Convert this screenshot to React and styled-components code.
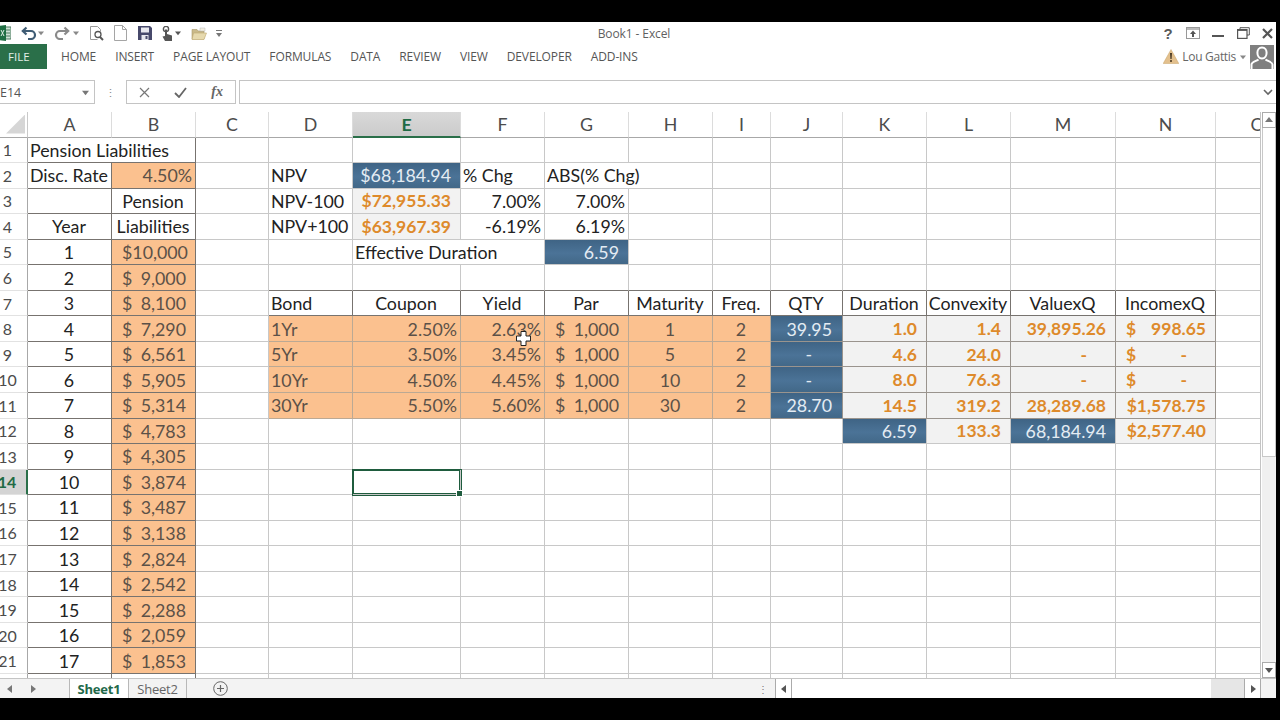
import React from "react";
import styled, { createGlobalStyle, css } from "styled-components";

const GlobalStyle = createGlobalStyle`
  html, body { margin: 0; padding: 0; background: #000; }
  body { width: 1280px; height: 720px; overflow: hidden; }
`;

const Screen = styled.div`
  width: 1280px;
  height: 720px;
  background: #000;
  padding-top: 22px;
  box-sizing: border-box;
`;
const Window = styled.div`
  width: 1276px;
  height: 676px;
  background: #fff;
  display: flex;
  flex-direction: column;
  overflow: hidden;
  font-family: "Open Sans", "Liberation Sans", sans-serif;
  color: #555;
`;

/* title bar */
const TitleBar = styled.div`
  height: 22px;
  flex: none;
  display: grid;
  grid-template-columns: 1fr auto 1fr;
  align-items: center;
`;
const QuickAccess = styled.div`
  display: flex;
  align-items: center;
  margin-left: -1px;
`;
const Slot = styled.span`
  display: flex;
  align-items: center;
  justify-content: center;
  flex: none;
  width: ${(p) => p.$w}px;
  height: 20px;
  margin-left: ${(p) => p.$ml || 0}px;
  svg {
    flex: none;
  }
`;
const Title = styled.div`
  font-size: 12px;
  color: #5f5f5f;
  letter-spacing: -0.1px;
  margin-right: 8px;
`;
const WindowButtons = styled.div`
  display: flex;
  justify-content: flex-end;
  align-items: center;
`;
const Help = styled.span`
  font: bold 15px "Liberation Sans", sans-serif;
  color: #5a5a5a;
`;

/* ribbon tabs */
const Ribbon = styled.div`
  height: 25px;
  flex: none;
  display: flex;
  align-items: center;
`;
const FileTab = styled.div`
  width: 47px;
  height: 25px;
  background: #2a6f49;
  color: #e3efe8;
  font-size: 11.5px;
  display: flex;
  align-items: center;
  padding-left: 8px;
  box-sizing: border-box;
  margin-right: 14px;
`;
const Tab = styled.div`
  font-size: 12px;
  letter-spacing: -0.12px;
  color: #555;
  white-space: nowrap;
  margin-right: ${(p) => p.$gap}px;
`;
const Account = styled.div`
  margin-left: auto;
  display: flex;
  align-items: center;
  height: 25px;
  font-size: 12px;
  letter-spacing: -0.3px;
  color: #666;
`;
const AccountName = styled.span`
  margin: 0 4px 0 3px;
`;
const Avatar = styled.div`
  width: 24px;
  height: 24px;
  background: #7f7f7f;
  margin: 0 2px 0 4px;
`;

/* formula bar */
const FormulaRow = styled.div`
  height: 43px;
  flex: none;
  box-sizing: border-box;
  padding-top: 11px;
  display: flex;
  align-items: flex-start;
`;
const NameBox = styled.div`
  width: 95px;
  height: 24px;
  box-sizing: border-box;
  border: 1px solid #c4c4c4;
  border-left: 0;
  display: flex;
  align-items: center;
  justify-content: space-between;
  padding-right: 5px;
  font-size: 12.5px;
  color: #555;
`;
const Grip = styled.div`
  width: 31px;
  height: 24px;
  display: flex;
  align-items: center;
  justify-content: center;
  color: #888;
  font-size: 11px;
`;
const FormulaButtons = styled.div`
  width: 110px;
  height: 24px;
  box-sizing: border-box;
  border: 1px solid #c4c4c4;
  display: flex;
  align-items: center;
  justify-content: space-around;
  margin-right: 3px;
`;
const FxLabel = styled.span`
  font: italic bold 14px "Liberation Serif", serif;
  color: #666;
`;
const FormulaInput = styled.div`
  flex: 1;
  height: 24px;
  box-sizing: border-box;
  border: 1px solid #c4c4c4;
  border-right: 0;
  display: flex;
  align-items: center;
  justify-content: flex-end;
  padding-right: 3px;
`;

/* sheet */
const Body = styled.div`
  flex: 1;
  min-height: 0;
  display: flex;
`;
const SheetArea = styled.div`
  position: relative;
  width: 1261px;
  flex: none;
  overflow: hidden;
  border-right: 1px solid #c4c4c4;
  box-sizing: border-box;
`;
const Grid = styled.div`
  display: grid;
  grid-template-columns: 28px 84px 84px 73px 84px 108px 84px 84px 84px 58px 72px 84px 84px 105px 100px 84px;
  grid-template-rows: 25.5px repeat(22, 25.55px);
  font-family: Lato, "Open Sans", sans-serif;
  font-size: 17.8px;
  color: #222;
`;
const Corner = styled.div`
  background: #fff;
  border-bottom: 1px solid #a8a8a8;
  border-right: 1px solid #c9c9c9;
  box-sizing: border-box;
  display: flex;
  align-items: flex-end;
  justify-content: flex-end;
  padding: 0 2px 3px 0;
  &::after {
    content: "";
    width: 19px;
    height: 19px;
    background: #d6d6d6;
    clip-path: polygon(100% 0, 100% 100%, 0 100%);
  }
`;
const ColHead = styled.div`
  display: flex;
  align-items: center;
  justify-content: center;
  box-sizing: border-box;
  border-right: 1px solid #dcdcdc;
  border-bottom: 1px solid #a8a8a8;
  color: #4c4c4c;
  ${(p) =>
    p.$active &&
    css`
      background: linear-gradient(#d9d9d9, #cbcbcb);
      color: #1f6b45;
      font-weight: 700;
      border-bottom: 2px solid #2a6f49;
    `}
`;
const RowHead = styled.div`
  display: flex;
  align-items: center;
  justify-content: center;
  box-sizing: border-box;
  padding-right: 12px;
  border-right: 1px solid #a8a8a8;
  border-bottom: 1px solid #e2e2e2;
  color: #4c4c4c;
  font-size: 16px;
  white-space: nowrap;
  ${(p) =>
    p.$active &&
    css`
      background: #d4d4d4;
      color: #1f6b45;
      font-weight: 700;
      border-right: 2px solid #2a6f49;
    `}
`;

const tones = {
  peach: css`
    background: #fbc18f;
    color: #5c5148;
  `,
  navy: css`
    background: linear-gradient(#3f6485, #4b7397 55%, #426888);
    color: #e4ecf3;
  `,
  calc: css`
    background: #f2f2f2;
    color: #de8a2b;
    font-weight: 700;
    font-size: 17.5px;
  `,
};
const Cell = styled.div`
  position: relative;
  min-width: 0;
  box-sizing: border-box;
  display: flex;
  align-items: center;
  white-space: nowrap;
  padding: 0 ${(p) => p.$padR ?? 3}px 0 ${(p) => p.$padL ?? 2}px;
  justify-content: ${(p) =>
    p.$money ? "space-between" : p.$align === "right" ? "flex-end" : p.$align === "center" ? "center" : "flex-start"};
  grid-column: span ${(p) => p.$span || 1};
  border-right: 1px solid ${(p) => p.$lineR};
  border-bottom: 1px solid ${(p) => p.$lineB};
  ${(p) => p.$tone && tones[p.$tone]}
  ${(p) =>
    p.$selected &&
    css`
      z-index: 1;
      box-shadow: inset 0 0 0 1px #1f5c3e, 0 0 0 1px #1f5c3e;
      &::after {
        content: "";
        position: absolute;
        right: -3px;
        bottom: -3px;
        width: 5px;
        height: 5px;
        background: #1f5c3e;
        border: 1px solid #fff;
      }
    `}
`;
const Pointer = styled.div`
  position: absolute;
  left: 516px;
  top: 219px;
  line-height: 0;
  z-index: 2;
`;

/* vertical scroll bar */
const VScroll = styled.div`
  flex: 1;
  display: flex;
  flex-direction: column;
  background: #f0f0f0;
  margin-left: 1px;
`;
const ScrollBtn = styled.div`
  height: 16px;
  flex: none;
  background: #fff;
  box-sizing: border-box;
  border: 1px solid #ababab;
  display: flex;
  align-items: center;
  justify-content: center;
`;
const VThumb = styled.div`
  height: 329px;
  flex: none;
  background: #fff;
  box-sizing: border-box;
  border: 1px solid #c8c8c8;
  border-top: 0;
`;
const VTrack = styled.div`
  flex: 1;
`;

/* sheet tabs + horizontal scroll bar */
const TabStrip = styled.div`
  height: 20px;
  flex: none;
  display: flex;
  align-items: stretch;
  background: #f3f3f3;
  border-top: 1px solid #c4c4c4;
  box-sizing: border-box;
  font-size: 13px;
`;
const NavArrows = styled.div`
  width: 69px;
  flex: none;
  display: flex;
  align-items: center;
  gap: 15px;
  padding-left: 6px;
  box-sizing: border-box;
`;
const SheetTab = styled.div`
  width: 59px;
  flex: none;
  display: flex;
  align-items: center;
  justify-content: center;
  box-sizing: border-box;
  border-left: 1px solid #b8b8b8;
  border-right: ${(p) => (p.$active ? "0" : "1px solid #b8b8b8")};
  background: ${(p) => (p.$active ? "#fff" : "#f3f3f3")};
  color: ${(p) => (p.$active ? "#22694a" : "#666")};
  font-weight: ${(p) => (p.$active ? 700 : 400)};
  letter-spacing: -0.2px;
`;
const AddSheet = styled.div`
  width: 563px;
  flex: none;
  display: flex;
  align-items: center;
  padding-left: 26px;
  box-sizing: border-box;
`;
const SplitDots = styled.div`
  width: 25px;
  flex: none;
  color: #777;
  display: flex;
  align-items: center;
  justify-content: center;
  font-size: 10px;
`;
const HBtn = styled.div`
  width: 17px;
  flex: none;
  background: #fff;
  box-sizing: border-box;
  border: 1px solid #ababab;
  border-width: 0 1px;
  display: flex;
  align-items: center;
  justify-content: center;
`;
const HThumb = styled.div`
  width: 419px;
  flex: none;
  background: #fff;
`;
const HTrack = styled.div`
  width: 33px;
  flex: none;
  background: #e6e6e6;
`;

const Arrow = ({ dir = "down", size = 8, color = "#666" }) => {
  const pts = {
    down: "0,2 8,2 4,7",
    up: "0,6 8,6 4,1",
    left: "6,0 6,8 1,4",
    right: "2,0 2,8 7,4",
  };
  return (
    <svg width={size} height={size} viewBox="0 0 8 8">
      <polygon points={pts[dir]} fill={color} />
    </svg>
  );
};

const ExcelLogo = () => (
  <svg width="12" height="16" viewBox="0 0 12 16">
    <rect x="5" y="2" width="7" height="12" fill="#cfe2d6" stroke="#4b7a5e" />
    <path d="M7 5h4M7 8h4M7 11h4" stroke="#4b7a5e" />
    <path d="M0 1l7 -1v16l-7 -1z" fill="#1f6e43" />
    <path d="M2 5l3 6M5 5l-3 6" stroke="#dfeee5" />
  </svg>
);
const UndoIcon = ({ color, flip }) => (
  <svg width="16" height="14" viewBox="0 0 16 14" style={flip ? { transform: "scaleX(-1)" } : undefined}>
    <path d="M5.5 1.5L1.8 5l3.7 3.5" fill="none" stroke={color} strokeWidth="2.2" />
    <path d="M2 5h8a4 4 0 0 1 0 8H7" fill="none" stroke={color} strokeWidth="2.2" />
  </svg>
);
const PreviewIcon = () => (
  <svg width="16" height="16" viewBox="0 0 16 16">
    <path d="M1.5 14.5v-13h7l3 3v2" fill="none" stroke="#9a9a9a" />
    <path d="M1.5 14.5h7" fill="none" stroke="#9a9a9a" />
    <circle cx="9" cy="9.5" r="3" fill="#fff" stroke="#555" strokeWidth="1.3" />
    <path d="M11 12l3 3" stroke="#555" strokeWidth="2" />
  </svg>
);
const DocIcon = () => (
  <svg width="13" height="16" viewBox="0 0 13 16">
    <path d="M.5 15.5V.5h8l4 4v11zM8.5.5v4h4" fill="#fff" stroke="#a5a5a5" />
  </svg>
);
const SaveIcon = () => (
  <svg width="14" height="14" viewBox="0 0 14 14">
    <path d="M0 0h12l2 2v12H0z" fill="#47496b" />
    <rect x="3" y="1.5" width="8" height="5" fill="#e8e8ee" />
    <rect x="3.5" y="9" width="7" height="5" fill="#e8e8ee" />
    <rect x="7.5" y="10" width="2" height="3" fill="#47496b" />
  </svg>
);
const TouchIcon = () => (
  <svg width="13" height="15" viewBox="0 0 13 15">
    <circle cx="5" cy="3" r="2.6" fill="none" stroke="#555" strokeWidth="1.4" />
    <path d="M4 3.5h2V8l5 1.5V15H4L1.5 10.5 4 10z" fill="#555" />
  </svg>
);
const FolderIcon = () => (
  <svg width="16" height="13" viewBox="0 0 16 13">
    <path d="M1 2.5h5l1.2 1.5H13v8H1z" fill="#c9b98a" stroke="#a8986a" strokeWidth=".6" />
    <path d="M2.5 6h13L13 12.5H1z" fill="#e6d9ae" stroke="#bda86f" strokeWidth=".6" />
    <path d="M9 1h5v3H9z" fill="#f4f0e2" stroke="#bbb" strokeWidth=".5" />
  </svg>
);
const Customize = () => (
  <svg width="8" height="9" viewBox="0 0 8 9">
    <path d="M1 1.5h6" stroke="#777" />
    <polygon points="1,4 7,4 4,8" fill="#777" />
  </svg>
);
const RibbonDisplay = () => (
  <svg width="14" height="12" viewBox="0 0 14 12">
    <rect x=".5" y=".5" width="13" height="11" fill="#fff" stroke="#999" />
    <path d="M1 1h12v2H1z" fill="#bbb" />
    <path d="M7 3.5L4 7h2v3h2V7h2z" fill="#555" />
  </svg>
);
const Minimize = () => (
  <svg width="12" height="12" viewBox="0 0 12 12">
    <rect x="0" y="8" width="12" height="2" fill="#555" />
  </svg>
);
const Restore = () => (
  <svg width="13" height="12" viewBox="0 0 13 12">
    <path d="M3 2V.7h9.3V8H10" fill="none" stroke="#555" />
    <rect x=".6" y="2.6" width="9.4" height="8.8" fill="none" stroke="#555" strokeWidth="1.2" />
    <path d="M.6 3.2h9.4" stroke="#555" strokeWidth="1.4" />
  </svg>
);
const CloseIcon = () => (
  <svg width="11" height="11" viewBox="0 0 11 11">
    <path d="M1 1l9 9M10 1l-9 9" stroke="#555" strokeWidth="2.2" />
  </svg>
);
const WarnIcon = () => (
  <svg width="16" height="15" viewBox="0 0 16 15">
    <path d="M8 .5L15.8 14.5H.2z" fill="#e3c08d" stroke="#c9a468" strokeWidth=".5" />
    <path d="M7 4h2l-.4 6H7.4zM7.2 11h1.6v2H7.2z" fill="#4a3a25" />
  </svg>
);
const Person = () => (
  <svg width="24" height="24" viewBox="0 0 24 24">
    <path d="M12 2.5c3 0 4.6 2.4 4.6 5.2S15 13.5 12 13.5 7.4 10.5 7.4 7.7 9 2.5 12 2.5z" fill="none" stroke="#fff" strokeWidth="2" />
    <path d="M1.5 24v-4.5c0-2.5 5-3.5 7-5M22.5 24v-4.5c0-2.5-5-3.5-7-5" fill="none" stroke="#fff" strokeWidth="2" />
  </svg>
);
const CrossIcon = () => (
  <svg width="11" height="11" viewBox="0 0 11 11">
    <path d="M1 1l9 9M10 1l-9 9" stroke="#777" strokeWidth="1.2" />
  </svg>
);
const CheckIcon = () => (
  <svg width="13" height="11" viewBox="0 0 13 11">
    <path d="M1 6l4 4 7-9" fill="none" stroke="#666" strokeWidth="1.8" />
  </svg>
);
const PlusCircle = () => (
  <svg width="15" height="15" viewBox="0 0 15 15">
    <circle cx="7.5" cy="7.5" r="6.8" fill="none" stroke="#666" />
    <path d="M7.5 4v7M4 7.5h7" stroke="#666" strokeWidth="1.2" />
  </svg>
);
const MoveCursor = () => (
  <svg width="15" height="15" viewBox="0 0 15 15">
    <path d="M5 .5h5v4.5h4.5v5H10v4.5H5V10H.5V5H5z" fill="#fff" stroke="#222" />
  </svg>
);

const columns = "ABCDEFGHIJKLMNO".split("");
const liabilities = [10000, 9000, 8100, 7290, 6561, 5905, 5314, 4783, 4305, 3874, 3487, 3138, 2824, 2542, 2288, 2059, 1853];

const right = (text, tone, padR = 9) => ({ text, tone, align: "right", padR });
const center = (text, extra) => ({ text, align: "center", ...extra });
const money = (amount, tone, extra) => ({ money: amount, tone, padL: 10, padR: 9, ...extra });

const sheet = {
  1: { A: { text: "Pension Liabilities", span: 2 } },
  2: {
    A: { text: "Disc. Rate" },
    B: right("4.50%", "peach", 3),
    D: { text: "NPV" },
    E: right("$68,184.94", "navy"),
    F: { text: "% Chg" },
    G: { text: "ABS(% Chg)", span: 2 },
  },
  3: {
    B: center("Pension"),
    D: { text: "NPV-100" },
    E: right("$72,955.33", "calc"),
    F: right("7.00%", null, 3),
    G: right("7.00%", null, 3),
  },
  4: {
    A: center("Year"),
    B: center("Liabilities"),
    D: { text: "NPV+100" },
    E: right("$63,967.39", "calc"),
    F: right("-6.19%", null, 3),
    G: right("6.19%", null, 3),
  },
  5: { E: { text: "Effective Duration", span: 2 }, G: right("6.59", "navy") },
  7: {
    D: { text: "Bond" },
    E: center("Coupon"),
    F: center("Yield"),
    G: center("Par"),
    H: center("Maturity"),
    I: center("Freq."),
    J: center("QTY"),
    K: center("Duration"),
    L: center("Convexity"),
    M: center("ValuexQ"),
    N: center("IncomexQ"),
  },
  12: {
    K: right("6.59", "navy"),
    L: right("133.3", "calc"),
    M: right("68,184.94", "navy"),
    N: right("$2,577.40", "calc"),
  },
  14: { E: { selected: true } },
};

// bond table, rows 8 to 11
[
  ["1Yr", "2.50%", "2.63%", "1", "39.95", "1.0", "1.4", "39,895.26", "998.65"],
  ["5Yr", "3.50%", "3.45%", "5", "-", "4.6", "24.0", "-", "-"],
  ["10Yr", "4.50%", "4.45%", "10", "-", "8.0", "76.3", "-", "-"],
  ["30Yr", "5.50%", "5.60%", "30", "28.70", "14.5", "319.2", "28,289.68", "$1,578.75"],
].forEach(([bond, coupon, yld, maturity, qty, dur, conv, value, income], i) => {
  sheet[8 + i] = {
    D: { text: bond, tone: "peach" },
    E: right(coupon, "peach", 3),
    F: right(yld, "peach", 3),
    G: money("1,000", "peach"),
    H: center(maturity, { tone: "peach" }),
    I: center("2", { tone: "peach" }),
    J: right(qty, "navy", qty === "-" ? 30 : 10),
    K: right(dur, "calc"),
    L: right(conv, "calc"),
    M: right(value, "calc", value === "-" ? 28 : 9),
    N: income.startsWith("$") ? right(income, "calc") : money(income, "calc", income === "-" ? { padR: 28 } : undefined),
  };
});

// year / liabilities columns
liabilities.forEach((amount, i) => {
  const row = 5 + i;
  sheet[row] = {
    ...sheet[row],
    A: center(String(i + 1)),
    B: money(amount.toLocaleString("en-US"), "peach"),
  };
});

const GRID = "#c8c8c8";
const DARK = "#77736f";
const SOFT = "#9a948e";
const PEACH_LINE = "#bba994";

const cellLines = (row, col) => {
  const idx = columns.indexOf(col);
  if (idx < 2) return { r: DARK, b: DARK };
  const inBonds = idx >= 3 && idx <= 13;
  if (inBonds && (row === 6 || row === 7)) return { r: row === 7 ? DARK : GRID, b: DARK };
  if (inBonds && row >= 8 && row <= 11) {
    const line = idx <= 8 ? PEACH_LINE : SOFT;
    return { r: line, b: line };
  }
  return { r: GRID, b: GRID };
};

const renderRow = (row) => {
  const cells = [];
  let skip = 0;
  columns.forEach((col) => {
    if (skip > 0) {
      skip -= 1;
      return;
    }
    const c = sheet[row]?.[col] || {};
    if (c.span) skip = c.span - 1;
    const lines = cellLines(row, col);
    cells.push(
      <Cell
        key={col}
        $tone={c.tone}
        $align={c.align}
        $span={c.span}
        $padL={c.padL}
        $padR={c.padR}
        $money={c.money != null}
        $selected={c.selected}
        $lineR={lines.r}
        $lineB={lines.b}
      >
        {c.money != null ? (
          <>
            <span>$</span>
            <span>{c.money}</span>
          </>
        ) : (
          c.text
        )}
      </Cell>
    );
  });
  return cells;
};

const App = () => {
  const rows = Array.from({ length: 22 }, (_, i) => i + 1);
  return (
    <Screen>
      <GlobalStyle />
      <Window>
        <TitleBar>
          <QuickAccess>
            <Slot $w={12}>
              <ExcelLogo />
            </Slot>
            <Slot $w={15} $ml={10}>
              <UndoIcon color="#3f5c74" />
            </Slot>
            <Slot $w={8} $ml={1}>
              <Arrow size={6} color="#888" />
            </Slot>
            <Slot $w={16} $ml={9}>
              <UndoIcon color="#8a8a8a" flip />
            </Slot>
            <Slot $w={8} $ml={2}>
              <Arrow size={6} color="#888" />
            </Slot>
            <Slot $w={14} $ml={10}>
              <PreviewIcon />
            </Slot>
            <Slot $w={12} $ml={10}>
              <DocIcon />
            </Slot>
            <Slot $w={12} $ml={13}>
              <SaveIcon />
            </Slot>
            <Slot $w={12} $ml={10}>
              <TouchIcon />
            </Slot>
            <Slot $w={8} $ml={1}>
              <Arrow size={6} color="#555" />
            </Slot>
            <Slot $w={14} $ml={10}>
              <FolderIcon />
            </Slot>
            <Slot $w={8} $ml={9}>
              <Customize />
            </Slot>
          </QuickAccess>
          <Title>Book1 - Excel</Title>
          <WindowButtons>
            <Slot $w={20}>
              <Help>?</Help>
            </Slot>
            <Slot $w={30}>
              <RibbonDisplay />
            </Slot>
            <Slot $w={20}>
              <Minimize />
            </Slot>
            <Slot $w={30}>
              <Restore />
            </Slot>
            <Slot $w={18}>
              <CloseIcon />
            </Slot>
          </WindowButtons>
        </TitleBar>
        <Ribbon>
          <FileTab>FILE</FileTab>
          <Tab $gap={19}>HOME</Tab>
          <Tab $gap={19}>INSERT</Tab>
          <Tab $gap={19}>PAGE LAYOUT</Tab>
          <Tab $gap={19}>FORMULAS</Tab>
          <Tab $gap={19}>DATA</Tab>
          <Tab $gap={19}>REVIEW</Tab>
          <Tab $gap={19}>VIEW</Tab>
          <Tab $gap={19}>DEVELOPER</Tab>
          <Tab $gap={0}>ADD-INS</Tab>
          <Account>
            <WarnIcon />
            <AccountName>Lou Gattis</AccountName>
            <Arrow size={6} color="#888" />
            <Avatar>
              <Person />
            </Avatar>
          </Account>
        </Ribbon>
        <FormulaRow>
          <NameBox>
            <span>E14</span>
            <Arrow size={7} color="#777" />
          </NameBox>
          <Grip>⋮</Grip>
          <FormulaButtons>
            <CrossIcon />
            <CheckIcon />
            <FxLabel>fx</FxLabel>
          </FormulaButtons>
          <FormulaInput>
            <svg width="10" height="7" viewBox="0 0 10 7">
              <path d="M1 1l4 4 4-4" fill="none" stroke="#666" strokeWidth="1.6" />
            </svg>
          </FormulaInput>
        </FormulaRow>
        <Body>
          <SheetArea>
            <Grid>
              <Corner />
              {columns.map((col) => (
                <ColHead key={col} $active={col === "E"}>
                  {col}
                </ColHead>
              ))}
              {rows.map((row) => (
                <React.Fragment key={row}>
                  <RowHead $active={row === 14}>{row}</RowHead>
                  {renderRow(row)}
                </React.Fragment>
              ))}
            </Grid>
            <Pointer>
              <MoveCursor />
            </Pointer>
          </SheetArea>
          <VScroll>
            <ScrollBtn>
              <Arrow dir="up" color="#777" />
            </ScrollBtn>
            <VThumb />
            <VTrack />
            <ScrollBtn>
              <Arrow color="#555" />
            </ScrollBtn>
          </VScroll>
        </Body>
        <TabStrip>
          <NavArrows>
            <Arrow dir="left" color="#777" />
            <Arrow dir="right" color="#777" />
          </NavArrows>
          <SheetTab $active>Sheet1</SheetTab>
          <SheetTab>Sheet2</SheetTab>
          <AddSheet>
            <PlusCircle />
          </AddSheet>
          <SplitDots>⋮</SplitDots>
          <HBtn>
            <Arrow dir="left" color="#555" />
          </HBtn>
          <HThumb />
          <HTrack />
          <HBtn>
            <Arrow dir="right" color="#555" />
          </HBtn>
        </TabStrip>
      </Window>
    </Screen>
  );
};

export default App;
